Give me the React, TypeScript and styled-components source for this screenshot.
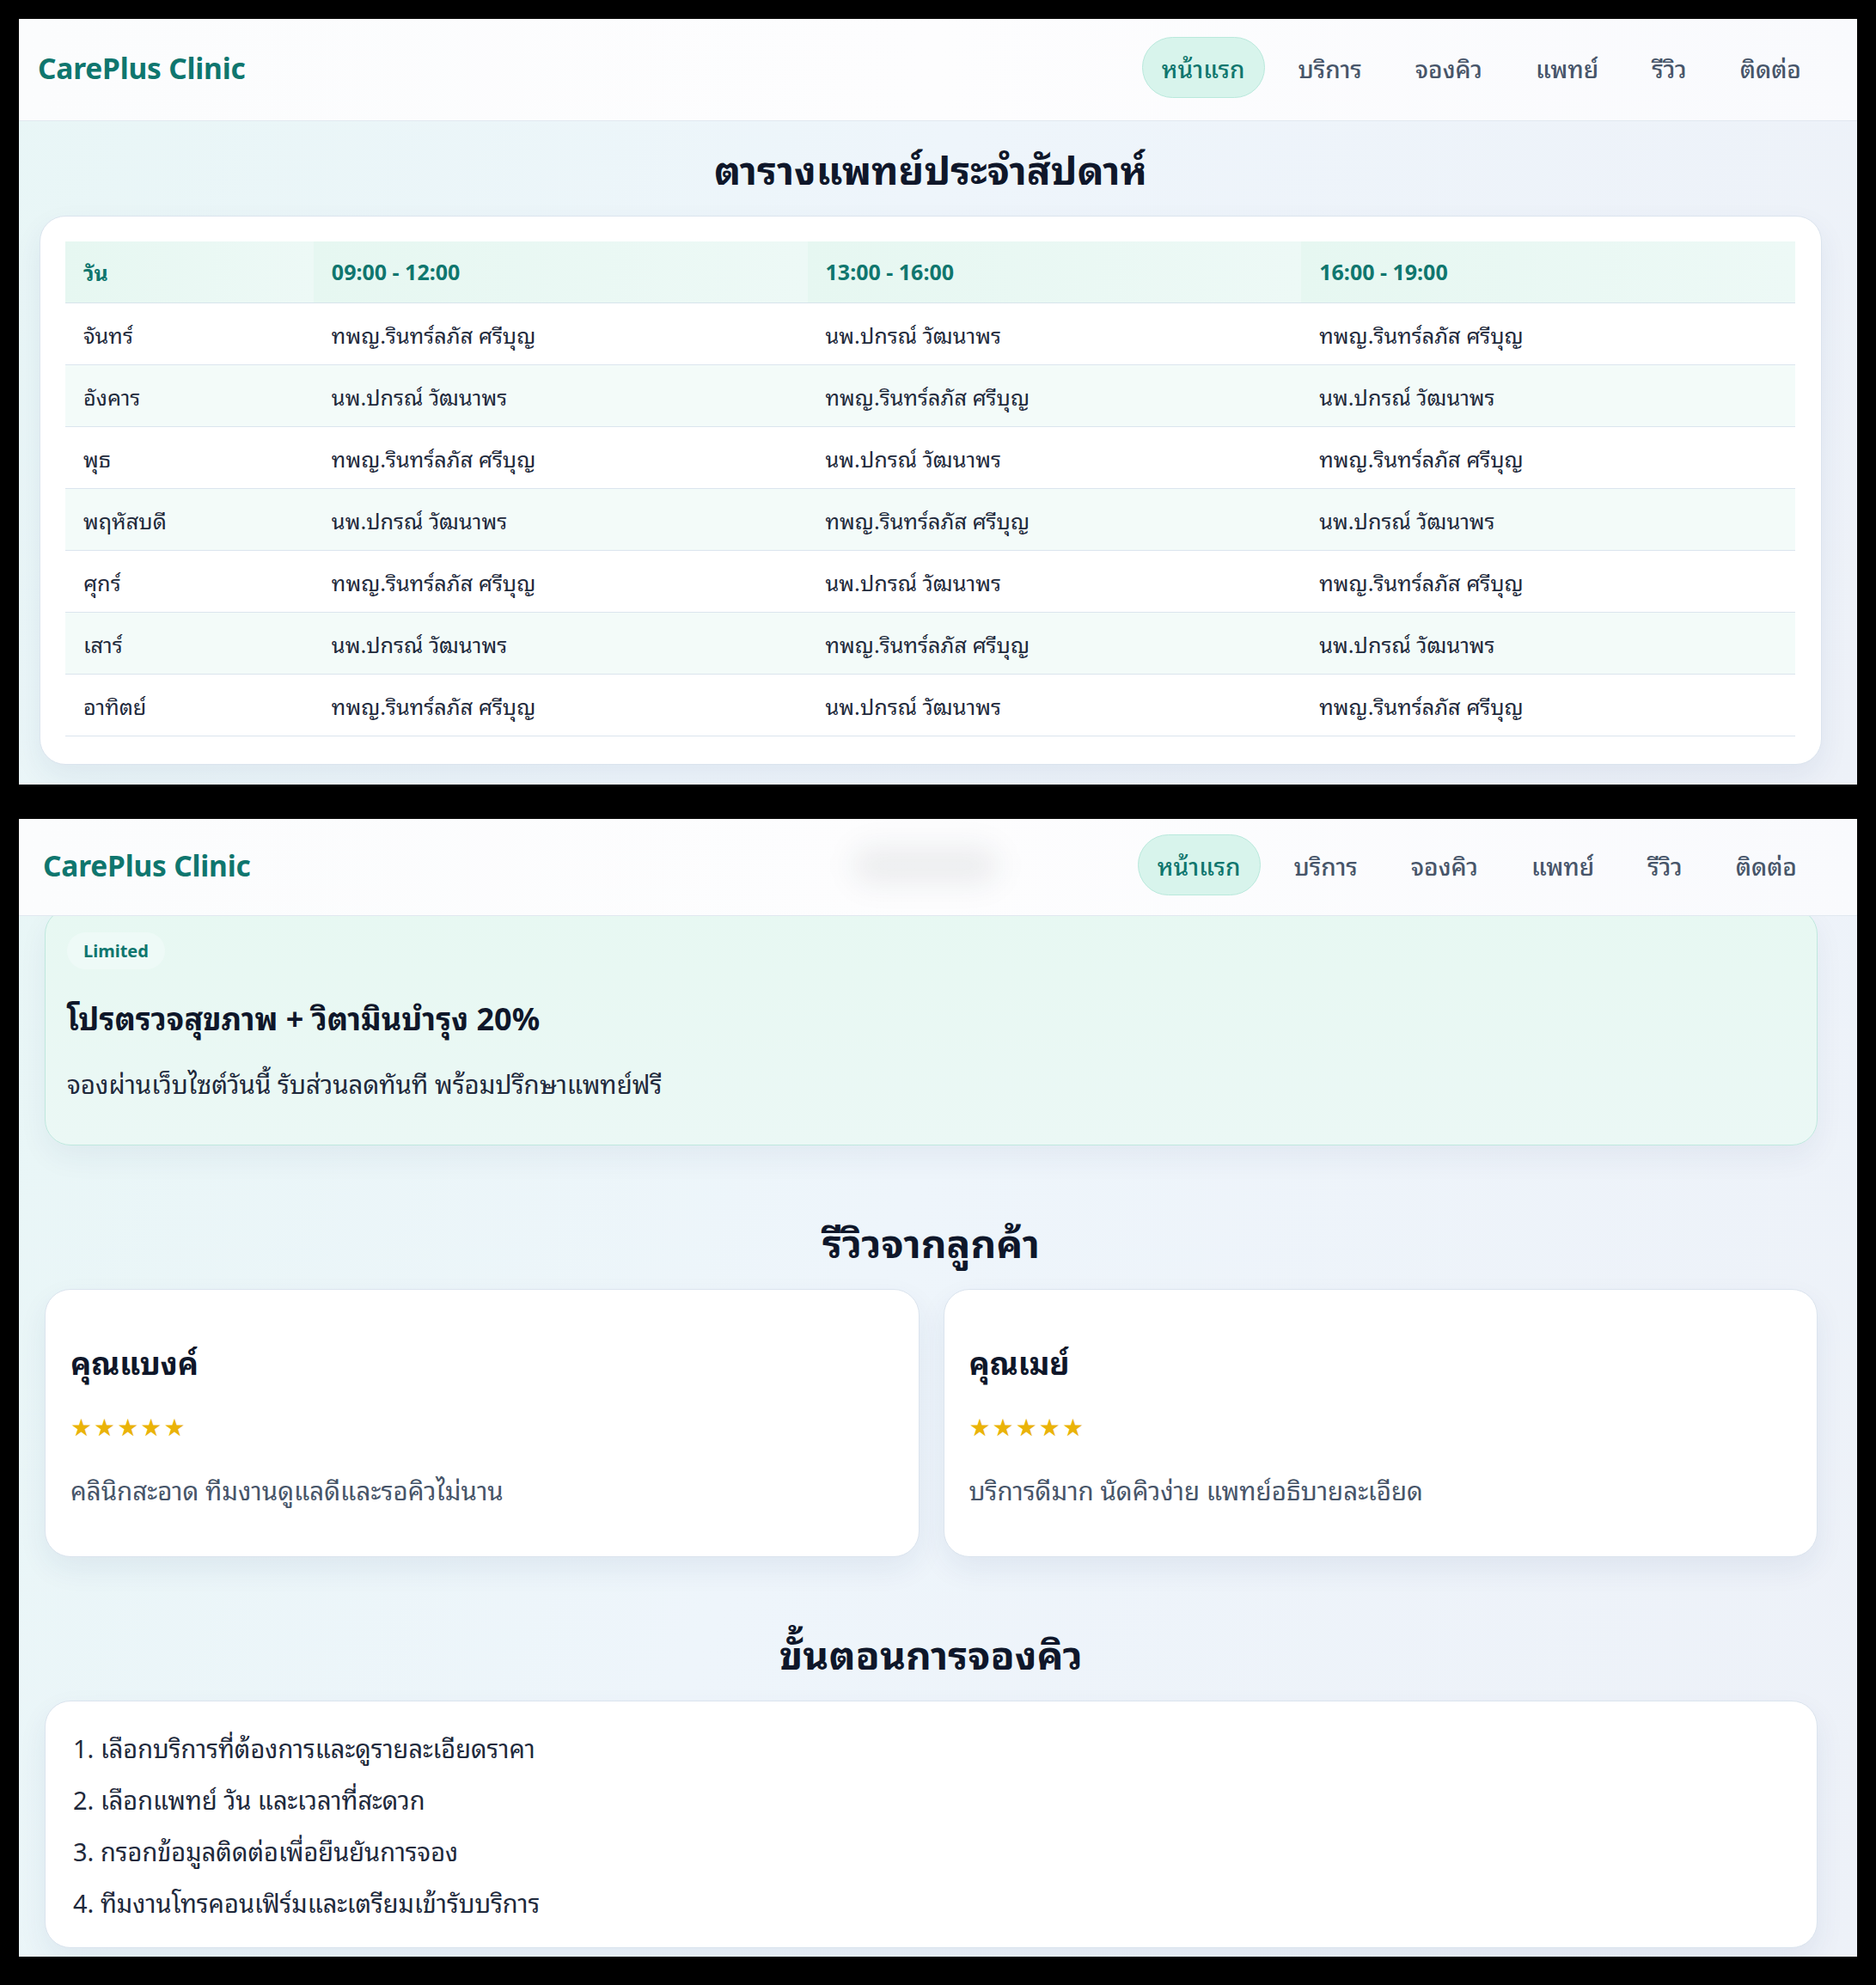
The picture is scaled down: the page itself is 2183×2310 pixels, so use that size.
import styled, { createGlobalStyle } from "styled-components";

const GlobalStyle = createGlobalStyle`
  * {
    box-sizing: border-box;
  }

  html,
  body {
    margin: 0;
    padding: 0;
    background: #000;
  }

  body {
    font-family: "Noto Sans", "Noto Sans Thai Looped", "Noto Sans Thai", sans-serif;
    color: #0f172a;
  }
`;

const Stage = styled.div`
  width: 2183px;
  min-height: 2310px;
  padding: 22px;
  display: flex;
  flex-direction: column;
  gap: 40px;
  background: #000;
`;

const Viewport = styled.section<{ $height: number }>`
  height: ${(p) => p.$height}px;
  overflow: hidden;
  display: flex;
  flex-direction: column;
  background: linear-gradient(115deg, #e8f6f6 0%, #eef5fb 45%, #edf1f8 100%);
`;

const Header = styled.header<{ $height: number; $left: number; $right: number }>`
  position: relative;
  z-index: 2;
  flex: none;
  height: ${(p) => p.$height}px;
  padding: 0 ${(p) => p.$right}px 5px ${(p) => p.$left}px;
  display: flex;
  align-items: center;
  justify-content: space-between;
  background: linear-gradient(90deg, #fbfcfd 0%, #fdfdfe 50%, #f9fafd 100%);
  border-bottom: 1px solid #e1e8f0;
`;

const HeaderHaze = styled.div`
  position: absolute;
  left: 50%;
  top: 50%;
  width: 170px;
  height: 44px;
  margin: -24px 0 0 -100px;
  border-radius: 30px;
  background: rgba(15, 23, 42, 0.07);
  filter: blur(16px);
  pointer-events: none;
`;

const Logo = styled.div`
  position: relative;
  font-size: 33.5px;
  font-weight: 700;
  color: #0f766e;
  letter-spacing: -0.2px;
`;

const Nav = styled.nav`
  position: relative;
  display: flex;
  align-items: center;
  gap: 16px;
`;

const NavItem = styled.a<{ $active?: boolean }>`
  height: 71px;
  padding: 0 22px;
  display: flex;
  align-items: center;
  border-radius: 999px;
  font-size: 28px;
  font-weight: 500;
  text-decoration: none;
  color: ${(p) => (p.$active ? "#0f766e" : "#475569")};
  background: ${(p) => (p.$active ? "#d8f4ec" : "transparent")};
  border: 1px solid ${(p) => (p.$active ? "#b9e9dc" : "transparent")};
`;

const Main = styled.main<{ $left: number; $right: number; $top: number }>`
  flex: 1;
  padding: ${(p) => p.$top}px ${(p) => p.$right}px 0 ${(p) => p.$left}px;
  display: flex;
  flex-direction: column;
`;

const SectionTitle = styled.h2<{ $gapTop?: number }>`
  margin: ${(p) => p.$gapTop ?? 0}px 0 22px;
  height: 64px;
  line-height: 64px;
  text-align: center;
  font-size: 46px;
  font-weight: 700;
  color: #0f172a;
`;

const Card = styled.div`
  background: #fff;
  border: 1px solid #dbe4ee;
  border-radius: 30px;
  box-shadow: 0 14px 34px rgba(30, 58, 110, 0.07);
`;

const TableCard = styled(Card)`
  padding: 29px 30px 32px 29px;
`;

const Table = styled.table`
  width: 100%;
  border-collapse: collapse;
  table-layout: fixed;
`;

const HeadCell = styled.th<{ $width?: string }>`
  width: ${(p) => p.$width ?? "auto"};
  height: 71px;
  padding: 0 21px;
  text-align: left;
  font-size: 25px;
  font-weight: 700;
  color: #0f766e;
  background: linear-gradient(90deg, #e6f7f1 0%, #edf9f6 100%);
  border-bottom: 1px solid #d7e4ec;
`;

const BodyRow = styled.tr<{ $shade: boolean }>`
  background: ${(p) => (p.$shade ? "#f3fbf9" : "#fff")};
`;

const Cell = styled.td`
  height: 72px;
  padding: 0 21px;
  font-size: 25.3px;
  color: #1e293b;
  border-bottom: 1px solid #dbe5ee;
`;

const PromoCard = styled.div`
  margin-top: -9px;
  padding: 27px 25px 50px;
  border-radius: 30px;
  background: linear-gradient(180deg, #e7f8f2 0%, #ebf8f5 100%);
  border: 1px solid #bfe8de;
  box-shadow: 0 14px 34px rgba(30, 58, 110, 0.06);
`;

const Badge = styled.span`
  display: inline-flex;
  align-items: center;
  height: 43px;
  padding: 0 19px;
  border-radius: 999px;
  background: #eefaf7;
  font-size: 20px;
  font-weight: 700;
  color: #0f766e;
`;

const PromoTitle = styled.h3`
  margin: 34px 0 0;
  line-height: 48px;
  font-size: 36px;
  font-weight: 700;
  color: #0f172a;
`;

const PromoText = styled.p`
  margin: 32px 0 0;
  line-height: 40px;
  font-size: 29.5px;
  color: #1e293b;
`;

const ReviewGrid = styled.div`
  display: grid;
  grid-template-columns: 1fr 1fr;
  gap: 28px;
`;

const ReviewCard = styled(Card)`
  height: 312px;
  padding: 62px 29px 0;
  display: flex;
  flex-direction: column;
`;

const ReviewName = styled.h3`
  margin: 0;
  line-height: 48px;
  font-size: 36px;
  font-weight: 700;
  color: #0f172a;
`;

const Stars = styled.div`
  margin-top: 31px;
  line-height: 40px;
  font-size: 28px;
  letter-spacing: 2px;
  color: #eab308;
  font-family: "DejaVu Sans", sans-serif;
`;

const ReviewText = styled.p`
  margin: 33px 0 0;
  line-height: 40px;
  font-size: 29.5px;
  color: #475569;
`;

const StepsCard = styled(Card)`
  padding: 35px 32px 31px;
`;

const StepList = styled.ol`
  margin: 0;
  padding: 0;
  list-style: decimal inside;
  display: flex;
  flex-direction: column;
  gap: 20px;
`;

const Step = styled.li`
  line-height: 40px;
  font-size: 29px;
  color: #1e293b;
`;

const navLinks = ["หน้าแรก", "บริการ", "จองคิว", "แพทย์", "รีวิว", "ติดต่อ"];

const DR_RIN = "ทพญ.รินทร์ลภัส ศรีบุญ";
const DR_PAKORN = "นพ.ปกรณ์ วัฒนาพร";

const days = ["จันทร์", "อังคาร", "พุธ", "พฤหัสบดี", "ศุกร์", "เสาร์", "อาทิตย์"];

const schedule = days.map((day, i) =>
  i % 2 === 0
    ? { day, slots: [DR_RIN, DR_PAKORN, DR_RIN] }
    : { day, slots: [DR_PAKORN, DR_RIN, DR_PAKORN] }
);

const reviews = [
  { name: "คุณแบงค์", text: "คลินิกสะอาด ทีมงานดูแลดีและรอคิวไม่นาน" },
  { name: "คุณเมย์", text: "บริการดีมาก นัดคิวง่าย แพทย์อธิบายละเอียด" },
];

const steps = [
  "เลือกบริการที่ต้องการและดูรายละเอียดราคา",
  "เลือกแพทย์ วัน และเวลาที่สะดวก",
  "กรอกข้อมูลติดต่อเพื่อยืนยันการจอง",
  "ทีมงานโทรคอนเฟิร์มและเตรียมเข้ารับบริการ",
];

type TopBarProps = { height: number; left: number; right: number; hazy?: boolean };

const TopBar = ({ height, left, right, hazy }: TopBarProps) => (
  <Header $height={height} $left={left} $right={right}>
    {hazy && <HeaderHaze />}
    <Logo>CarePlus Clinic</Logo>
    <Nav>
      {navLinks.map((label, i) => (
        <NavItem key={label} href="#" $active={i === 0}>
          {label}
        </NavItem>
      ))}
    </Nav>
  </Header>
);

const App = () => {
  return (
    <>
      <GlobalStyle />
      <Stage>
        <Viewport $height={891}>
          <TopBar height={119} left={22} right={42} />
          <Main $top={24} $left={24} $right={41}>
            <SectionTitle>ตารางแพทย์ประจำสัปดาห์</SectionTitle>
            <TableCard>
              <Table>
                <thead>
                  <tr>
                    <HeadCell $width="14.35%">วัน</HeadCell>
                    <HeadCell>09:00 - 12:00</HeadCell>
                    <HeadCell>13:00 - 16:00</HeadCell>
                    <HeadCell>16:00 - 19:00</HeadCell>
                  </tr>
                </thead>
                <tbody>
                  {schedule.map((row, i) => (
                    <BodyRow key={row.day} $shade={i % 2 === 1}>
                      <Cell>{row.day}</Cell>
                      {row.slots.map((doctor, j) => (
                        <Cell key={j}>{doctor}</Cell>
                      ))}
                    </BodyRow>
                  ))}
                </tbody>
              </Table>
            </TableCard>
          </Main>
        </Viewport>

        <Viewport $height={1324}>
          <TopBar height={113} left={28} right={47} hazy />
          <Main $top={0} $left={30} $right={46}>
            <PromoCard>
              <Badge>Limited</Badge>
              <PromoTitle>โปรตรวจสุขภาพ + วิตามินบำรุง 20%</PromoTitle>
              <PromoText>จองผ่านเว็บไซต์วันนี้ รับส่วนลดทันที พร้อมปรึกษาแพทย์ฟรี</PromoText>
            </PromoCard>

            <SectionTitle $gapTop={81}>รีวิวจากลูกค้า</SectionTitle>
            <ReviewGrid>
              {reviews.map((r) => (
                <ReviewCard key={r.name}>
                  <ReviewName>{r.name}</ReviewName>
                  <Stars>★★★★★</Stars>
                  <ReviewText>{r.text}</ReviewText>
                </ReviewCard>
              ))}
            </ReviewGrid>

            <SectionTitle $gapTop={81}>ขั้นตอนการจองคิว</SectionTitle>
            <StepsCard>
              <StepList>
                {steps.map((s) => (
                  <Step key={s}>{s}</Step>
                ))}
              </StepList>
            </StepsCard>
          </Main>
        </Viewport>
      </Stage>
    </>
  );
};

export default App;
